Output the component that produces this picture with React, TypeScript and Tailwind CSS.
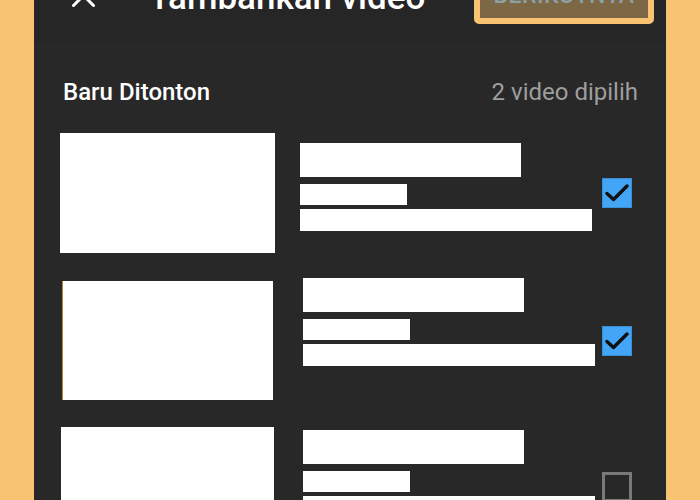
import React from 'react';

const rows = [
  {
    id: 1,
    wrap: 'mt-[27px]',
    thumb: 'ml-[26px] w-[215px] h-[120px]',
    text: 'ml-[25px] mt-[10px]',
    checked: true,
  },
  {
    id: 2,
    wrap: 'mt-[28px]',
    thumb: 'ml-[28px] w-[211px] h-[119px] border-l border-[#b8862f]',
    text: 'ml-[30px] -mt-[3px]',
    checked: true,
  },
  {
    id: 3,
    wrap: 'mt-[27px]',
    thumb: 'ml-[27px] w-[213px] h-[120px]',
    text: 'ml-[29px] mt-[3px]',
    checked: false,
  },
];

const CheckBox: React.FC<{ checked: boolean }> = ({ checked }) =>
  checked ? (
    <div className="w-[30px] h-[30px] bg-[#42a5f5] border border-[#3a8fd4] flex items-center justify-center">
      <svg width="24" height="20" viewBox="0 0 24 20" fill="none">
        <path d="M2 10.5 L8.5 16.5 L22 3" stroke="#111" strokeWidth="3.4" strokeLinecap="round" strokeLinejoin="round" />
      </svg>
    </div>
  ) : (
    <div className="w-[30px] h-[30px] border-[3px] border-[#7a7a7a]" />
  );

const App: React.FC = () => {
  return (
    <div className="w-[700px] h-[500px] bg-[#f8c471] overflow-hidden font-['Roboto',sans-serif]">
      <div className="ml-[34px] w-[632px] h-[500px] bg-[#282828] flex flex-col">
        {/* Header (scrolled partly out of view) */}
        <div className="h-[43px] shrink-0 bg-[#262626] overflow-hidden flex items-start">
          <svg className="ml-[38px] -mt-[16px] shrink-0" width="23" height="23" viewBox="0 0 23 23">
            <path d="M1.5 1.5 L21.5 21.5 M21.5 1.5 L1.5 21.5" stroke="#fff" strokeWidth="3" strokeLinecap="square" />
          </svg>
          <h1 className="ml-[54px] -mt-[20px] text-[35px] leading-[35px] font-medium text-white whitespace-nowrap">
            Tambahkan video
          </h1>
          <div className="ml-auto mr-[12px] -mt-[28px] w-[180px] h-[52px] shrink-0 border-[6px] border-[#f8c471] rounded-[5px] bg-[#7d6846] flex items-end justify-center">
            <span className="mb-[11px] text-[23px] leading-[23px] font-medium tracking-[0.5px] text-[#8da1a6]">BERIKUTNYA</span>
          </div>
        </div>

        {/* Section title */}
        <div className="mt-[35px] pl-[29px] pr-[28px] flex justify-between text-[24px] leading-[28px]">
          <span className="font-medium text-white">Baru Ditonton</span>
          <span className="text-[#9e9e9e]">2 video dipilih</span>
        </div>

        {/* Video list */}
        {rows.map((row) => (
          <div key={row.id} className={`${row.wrap} flex items-center shrink-0`}>
            <div className={`${row.thumb} bg-white shrink-0`} />
            <div className={`${row.text} self-start flex flex-col`}>
              <div className="w-[221px] h-[34px] bg-white" />
              <div className="w-[107px] h-[21px] bg-white mt-[7px]" />
              <div className="w-[292px] h-[22px] bg-white mt-[4px]" />
            </div>
            <div className="ml-auto mr-[34px]">
              <CheckBox checked={row.checked} />
            </div>
          </div>
        ))}
      </div>
    </div>
  );
};

export default App;
